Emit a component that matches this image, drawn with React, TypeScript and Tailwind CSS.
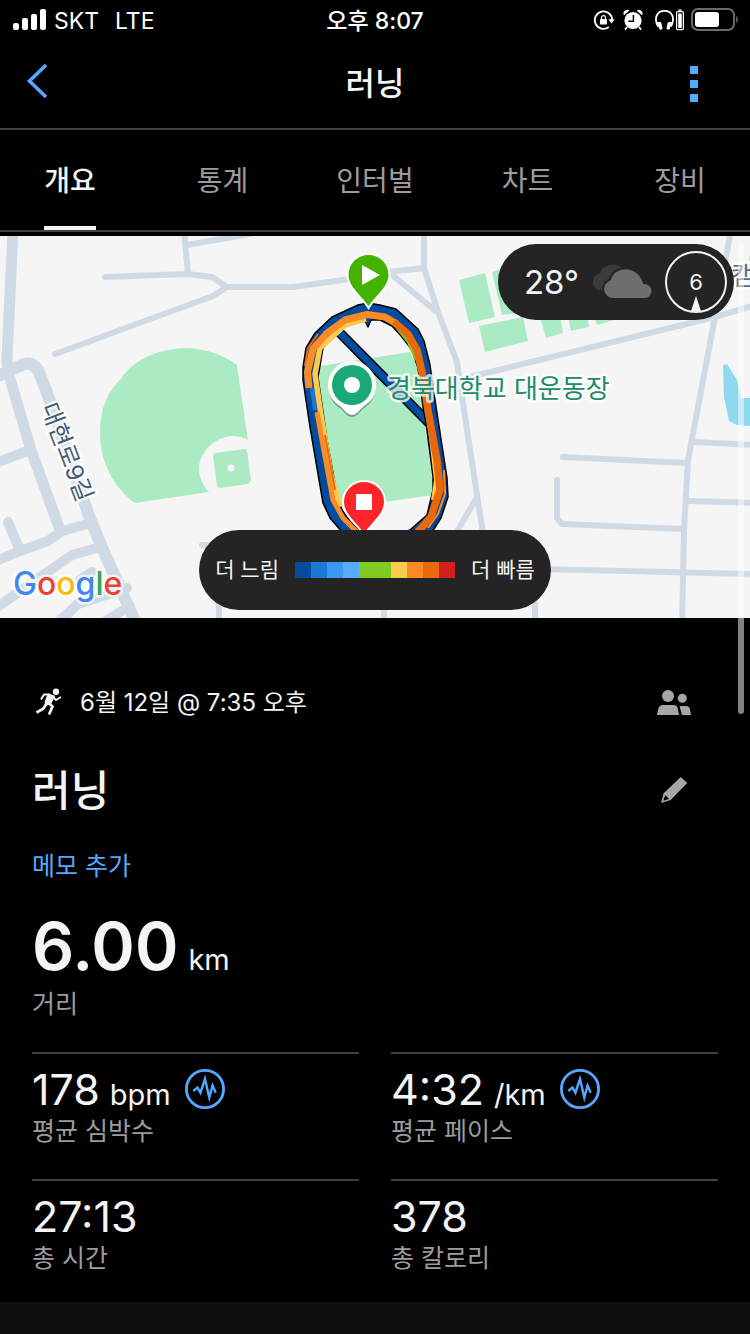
import type { ReactNode } from 'react';

const legendColors = [
  '#034b9f', '#1a78d6', '#3c97f5', '#58aaff', '#82cb20',
  '#82cb20', '#fccb4e', '#fc8b26', '#ea680c', '#d41f1f',
];

const tabs = ['개요', '통계', '인터벌', '차트', '장비'];

function StatusBar() {
  return (
    <div className="grid h-10 grid-cols-3 items-center px-3 text-[23px] leading-none text-white">
      <div className="flex items-center">
        <svg width="34" height="22" viewBox="0 0 34 22" fill="#fff" aria-hidden="true">
          <rect x="1" y="14" width="6" height="7" rx="2" />
          <rect x="10" y="9" width="6" height="12" rx="2" />
          <rect x="19" y="5" width="6" height="16" rx="2" />
          <rect x="28" y="0" width="6" height="21" rx="2" />
        </svg>
        <span className="ml-2 pt-0.5">SKT</span>
        <span className="ml-4 pt-0.5">LTE</span>
      </div>
      <div className="pt-0.5 text-center font-medium">오후 8:07</div>
      <div className="flex items-center justify-end">
        <svg width="22" height="22" viewBox="0 0 22 22" fill="none" stroke="#fff" strokeWidth="1.8" aria-hidden="true">
          <path d="M19.2 11a8.7 8.7 0 1 0-3.4 7" />
          <path d="M15.4 10.2h6.2l-3 4.4z" fill="#fff" stroke="none" />
          <rect x="7" y="10" width="7" height="5.6" rx="0.8" fill="#fff" stroke="none" />
          <path d="M8.5 10V8.6a2 2 0 0 1 4 0V10" strokeWidth="1.2" />
        </svg>
        <svg className="ml-2" width="20" height="22" viewBox="0 0 20 22" fill="#fff" aria-hidden="true">
          <circle cx="10" cy="11.5" r="8.6" />
          <path d="M1 6.2a3.6 3.6 0 0 1 5.4-4.6zM19 6.2a3.6 3.6 0 0 0-5.4-4.6z" />
          <path d="M4 18l-2 2.6M16 18l2 2.6" stroke="#fff" strokeWidth="1.8" />
          <path d="M10.4 6v6.3H5.4" fill="none" stroke="#000" strokeWidth="1.5" />
        </svg>
        <svg className="ml-3" width="30" height="22" viewBox="0 0 30 22" aria-hidden="true">
          <path d="M3 17.5C-1.5 9 2 1.8 9.500 1.800S20.500 9 16 17.500" fill="none" stroke="#fff" strokeWidth="1.8" />
          <path d="M2 13.500c2-1.500 4-.8 4.500 1l1 4.500c0 1.800-2.300 2.300-3.300.8zM17 13.500c-2-1.500-4-.8-4.500 1l-1 4.500c0 1.800 2.300 2.300 3.300.8z" fill="#fff" />
          <rect x="21.600" y="2.600" width="6.800" height="18" rx="1" fill="none" stroke="#fff" strokeWidth="1.200" />
          <rect x="23.400" y="0.400" width="3.200" height="1.400" fill="#fff" />
          <rect x="23.200" y="4.500" width="3.600" height="14.500" fill="#fff" />
        </svg>
        <svg className="-mr-px ml-1.5" width="48" height="24" viewBox="0 0 48 24" aria-hidden="true">
          <rect x="1" y="1" width="42" height="21" rx="6" fill="none" stroke="#6b6b6b" strokeWidth="2" />
          <rect x="4" y="4" width="24" height="15" rx="3" fill="#fff" />
          <path d="M45.200 8c2.200 1.200 2.200 5.800 0 7z" fill="#6b6b6b" />
        </svg>
      </div>
    </div>
  );
}

function RouteMap() {
  return (
    <svg
      className="block h-[382px] w-full"
      viewBox="0 236 750 382"
      preserveAspectRatio="xMidYMid slice"
      role="img"
      aria-label="러닝 경로 지도"
    >
      <rect x="0" y="236" width="750" height="382" fill="#f5f5f5" />

      {/* Parks, fields and water */}
      <g fill="#aaebc4">
        <path d="M135 503C112 486 100 460 100 433C100 408 108 391 121 379C133 359 160 348 188 348C207 349 224 355 237 365L239 380L248 440C222 424 180 459 209 492Z" />
        <path d="M215 453L245 449Q247 449 247 451L251 481L248 484L220 488L217 486L213 455Z" />
        <path d="M320 366L410 352L418 368L434 495L340 508L318 400Z" />
        <path d="M459 280L485 273L495 317L469 323Z" />
        <path d="M492 272L520 262L530 312L502 315Z" />
        <path d="M479 326L523 317L528 341L485 352Z" />
        <path d="M541 320L560 316L563 333L546 338Z" />
        <path d="M568 316L587 312L589 327L571 331Z" />
        <path d="M594 316L614 314L614 320L597 325Z" />
        <path d="M749 256h1v6h-1z" />
      </g>
      <circle cx="231" cy="468" r="3.600" fill="#f5f5f5" />
      <path d="M723 365L727 364L737 380L741 398L750 398V426L737 425L729 421L724 397Z" fill="#8fd9ee" />

      {/* Streets */}
      <g fill="none" stroke="#d0dae4" strokeLinecap="round" strokeLinejoin="round" strokeWidth="6">
        <path d="M184 230L188 274M187 245L250 234M105 277L187 274L212 277L227 287L293 287L350 279M227 287L213 296L55 354" />
        <path d="M388 272L424 268V230M424 268L438 312L457 362L467 430L484 540M391 274L437 312" />
        <path d="M470 377L715 317L755 305M731 230L715 317L688 460L684 530L682 625" />
        <path d="M693 442L755 445M563 457L687 463M557 480V518L562 524L683 529M690 501L755 503M540 569L755 574" />
        <path d="M477 497L455 535M384 600V625M535 600V625M219 600V625M202 545H225" />
        <path d="M13 230L7 360L8 372L31 450L60 530" strokeWidth="11" />
        <path d="M-4 377L24 364Q33 362 38 370L46 390L88 513L100 543L138 628" strokeWidth="12" />
        <path d="M-4 463L30 450M-4 561L20 551L48 541L62 531L91 523M8 522L19 548M100 547L72 555L-4 608" strokeWidth="10" />
        <path d="M127 588L78 604L55 625M92 572L80 580M130 606L98 626" strokeWidth="10" />
      </g>

      {/* Recorded track */}
      <path d="M337 330L429 423" stroke="#000" strokeWidth="10" />
      <path d="M337 330L429 423" stroke="#034b9f" strokeWidth="7" />
      <path
        fillRule="evenodd"
        fill="#034b9f"
        stroke="#000"
        strokeWidth="1.500"
        strokeLinejoin="round"
        d="M368 303L380 305L396 309L418 329L424 341L430 365L435 400L447 478L448 497L441 518L428 538L415 545H355L343 533L330 518L323 503L310 427L303 380L303 367L306 348L315 333L332 317L358 305Z
           M365 321L368 327L371 320L380 320L392 326L402 337L412 350L418 368L423 407L426 423L433 477L433 490L427 515L410 530L390 538L363 534L350 521L342 510L337 495L327 440L318 377L323 348L340 328L353 321Z"
      />
      <g fill="none" strokeLinejoin="round">
        <path d="M305 366L308 348L318 334" stroke="#ea680c" strokeWidth="2" />
        <path d="M312 388L315 410" stroke="#1a78d6" strokeWidth="4" />
        <path d="M347 325L327 343M397 328L408 342L416 360" stroke="#82cb20" strokeWidth="2.500" />
        <path d="M366 319L345 325L320 348L315 374L321 415L331 475L340 507" stroke="#fccb4e" strokeWidth="5.500" />
        <path d="M426 400L432 445L436 480L433 500" stroke="#fccb4e" strokeWidth="4" />
        <path d="M309 388L307.500 372L313 349L327 333L345 320L367 314.500L385 317L397 324" stroke="#fc8b26" strokeWidth="7" />
        <path d="M317 412L322 440L333 500L343 518L357 532L368 540" stroke="#fc8b26" strokeWidth="5" />
        <path d="M325 435L335 490" stroke="#ea680c" strokeWidth="2" />
        <path d="M444 470L445 494L438 514L428 528" stroke="#fc8b26" strokeWidth="2" />
        <path d="M394 322L408 334L417 350L422 372L428 410L437 460L440 490L431 517L416 534" stroke="#ea680c" strokeWidth="7.500" />
      </g>

      {/* Place marker and labels */}
      <path d="M352 415C348 415 345 411 340 406C332 401 329 394 329 385A23 23 0 0 1 375 385C375 394 372 401 364 406C359 411 356 415 352 415Z" fill="#00000055" transform="translate(0 2)" />
      <path d="M352 415C348 415 345 411 340 406C332 401 328 394 328 385A24 24 0 0 1 376 385C376 394 372 401 364 406C359 411 356 415 352 415Z" fill="#fff" />
      <circle cx="352" cy="385" r="20" fill="#19a974" />
      <circle cx="352" cy="385" r="8" fill="#fff" />
      <g stroke="#ffffffcc" strokeWidth="5" strokeLinejoin="round" paintOrder="stroke">
        <text x="387" y="398" fontSize="26" fill="#208a69">경북대학교 대운동장</text>
        <text x="731" y="285" fontSize="26" fill="#566b7f">캠</text>
        <text x="67" y="452" fontSize="24" fill="#465b72" textAnchor="middle" dominantBaseline="central" transform="rotate(69 67 452)">대현로9길</text>
      </g>
      <text x="13" y="595" fontSize="32" fontWeight="500" stroke="#ffffffaa" strokeWidth="5" strokeLinejoin="round" paintOrder="stroke">
        <tspan fill="#4285f4">G</tspan><tspan fill="#ea4335">o</tspan><tspan fill="#fbbc05">o</tspan><tspan fill="#4285f4">g</tspan><tspan fill="#34a853">l</tspan><tspan fill="#ea4335">e</tspan>
      </text>

      {/* Start and finish pins */}
      <path d="M368.500 308C362 297 347.500 288 347.500 275A21 21 0 0 1 389.500 275C389.500 288 375 297 368.500 308Z" fill="#44b200" stroke="#fff" strokeWidth="2" />
      <path d="M362 265L380 275L362 285Z" fill="#fff" />
      <path d="M364 535C357 524 343 515 343 502A21 21 0 0 1 385 502C385 515 371 524 364 535Z" fill="#ff2429" stroke="#fff" strokeWidth="2" />
      <rect x="356" y="494" width="16" height="16" fill="#fff" />
    </svg>
  );
}

function Weather() {
  return (
    <div className="absolute top-2 right-4 flex h-[76px] items-center rounded-full bg-[#242424] pr-[7px] pl-[26px] text-[#f4f4f4]">
      <span className="text-[33px] leading-none">28°</span>
      <svg className="ml-3 shrink-0" width="62" height="36" viewBox="0 0 62 36" aria-hidden="true">
        <path d="M8 26A8.500 8.500 0 0 1 9 9.500C11 -1 29 -3 34 8L30 26Z" fill="#3b3b3b" />
        <path d="M22 35A10 10 0 0 1 19 15.500C22 1 47 -1 53 19A8 8 0 0 1 54 35Z" fill="#6e6e6e" stroke="#242424" strokeWidth="2" />
      </svg>
      <div className="relative ml-3 flex size-[62px] items-center justify-center rounded-full border-2 border-[#f4f4f4]">
        <span className="text-[22px] leading-none">6</span>
        <svg className="absolute bottom-0" width="12" height="15" viewBox="0 0 12 15" aria-hidden="true">
          <path d="M6 0L11 15H1Z" fill="#f4f4f4" />
        </svg>
      </div>
    </div>
  );
}

function Legend() {
  return (
    <div className="absolute inset-x-0 bottom-2 flex justify-center">
      <div className="flex h-20 items-center gap-4 rounded-full bg-[#242424] px-4 text-[21px] text-[#f4f4f4]">
        <span>더 느림</span>
        <div className="flex">
          {legendColors.map((color, i) => (
            <span key={i} className="h-4 w-4" style={{ backgroundColor: color }} />
          ))}
        </div>
        <span>더 빠름</span>
      </div>
    </div>
  );
}

function WaveButton({ label }: { label: string }) {
  return (
    <button type="button" aria-label={label} className="ml-3.5 self-center">
      <svg width="40" height="40" viewBox="0 0 40 40" fill="none" stroke="#54a8ff" aria-hidden="true">
        <circle cx="20" cy="20" r="18.600" strokeWidth="2.800" />
        <path d="M8.300 22L12.500 18.500L15.400 23.700L20 10L24.300 28.500L27.600 16.500L30.700 23.700" strokeWidth="2.400" strokeMiterlimit="6" />
      </svg>
    </button>
  );
}

function Stat({ value, unit, label, children }: { value: string; unit?: string; label: string; children?: ReactNode }) {
  return (
    <div className="border-t-2 border-[#404040] pt-[11px] pb-[30px]">
      <div className="flex h-12 items-baseline leading-[48px]">
        <span className="text-[43px]">{value}</span>
        {unit && <span className="ml-2.5 text-[29px]">{unit}</span>}
        {children}
      </div>
      <div className="text-[25px] leading-9 text-[#9c9c9c]">{label}</div>
    </div>
  );
}

export default function App() {
  return (
    <div className="relative min-h-screen overflow-hidden bg-black font-['Inter','Noto_Sans_CJK_KR',sans-serif] text-[#f4f4f4]">
      <StatusBar />
      <header className="flex h-[90px] items-center justify-between border-b-2 border-[#404040] px-6">
        <button type="button" aria-label="뒤로" className="flex size-16 items-center pb-1.5">
          <svg width="26" height="36" viewBox="0 0 26 36" fill="none" stroke="#54a8ff" strokeWidth="3.600" aria-hidden="true">
            <path d="M22 2L5.500 18L22 34" />
          </svg>
        </button>
        <h1 className="text-[32px] font-medium">러닝</h1>
        <button type="button" aria-label="더보기" className="flex size-16 flex-col items-center justify-center gap-1.5">
          <span className="size-2 bg-[#54a8ff]" />
          <span className="size-2 bg-[#54a8ff]" />
          <span className="size-2 bg-[#54a8ff]" />
        </button>
      </header>
      <nav className="mb-1 flex h-[102px] justify-between border-b-2 border-[#404040] px-8">
        {tabs.map((tab, i) => (
          <a
            key={tab}
            href="#"
            className="flex w-19 justify-center text-[28px] whitespace-nowrap"
          >
            <span className={i === 0 ? 'flex items-center border-b-4 border-[#f4f4f4] pt-1.5 font-medium' : 'flex items-center border-b-4 border-transparent pt-1.5 text-[#9c9c9c]'}>
              {tab}
            </span>
          </a>
        ))}
      </nav>

      <div className="relative">
        <RouteMap />
        <Weather />
        <Legend />
      </div>

      <main className="px-8 pt-[60px]">
        <div className="flex h-12 items-center">
          <svg className="ml-1" width="28" height="28" viewBox="0 0 28 28" fill="none" stroke="#f4f4f4" strokeLinejoin="round" aria-hidden="true">
            <circle cx="20" cy="3.700" r="3.200" fill="#f4f4f4" stroke="none" />
            <path d="M12 6L18.500 8L15 15.500L10 17.500L9 14Z" fill="#f4f4f4" strokeWidth="1" />
            <path d="M14 6.500H8L5 11.500M17 9L20 12L25 9" strokeWidth="2" />
            <path d="M10.500 15.500L7.500 20.500L0.500 24.500M12 14.500L16.500 18.500L13 26.500" strokeWidth="2.800" />
          </svg>
          <span className="ml-4 pt-0.5 text-[24px]">6월 12일 @ 7:35 오후</span>
          <button type="button" aria-label="공개 설정" className="mr-[26px] ml-auto">
            <svg width="35" height="25" viewBox="0 0 35 25" fill="#a6a6a6" aria-hidden="true">
              <circle cx="11" cy="6" r="6" />
              <path d="M0 25L1.300 18.800Q2.200 15 6 15H16.500Q19.800 15 20.700 18.300L22 25Z" />
              <circle cx="25.300" cy="8.300" r="4.500" />
              <path d="M22.500 16H29Q32.300 16 32.900 19L34 25H25Z" />
            </svg>
          </button>
        </div>
        <div className="mt-8 flex h-16 items-center">
          <h2 className="text-[42px] font-medium">러닝</h2>
          <button type="button" aria-label="이름 편집" className="mr-[30px] ml-auto">
            <svg width="27" height="27" viewBox="0 0 27 27" aria-hidden="true">
              <path d="M0 26L2.700 16.300L19.700 0L26.300 6L9.700 23Z" fill="#a6a6a6" />
              <path d="M4.200 18L8 22L2.300 23.800Z" fill="#000" />
            </svg>
          </button>
        </div>
        <a href="#" className="mt-[26px] block text-[25px] leading-9 text-[#54a8ff]">메모 추가</a>

        <div className="mt-[22px] flex h-20 items-baseline leading-[80px]">
          <span className="text-[66px] font-semibold">6.00</span>
          <span className="ml-2.5 text-[29px]">km</span>
        </div>
        <div className="text-[25px] leading-9 text-[#9c9c9c]">거리</div>

        <div className="mt-[30px] -mb-1 grid grid-cols-2 gap-x-8">
          <Stat value="178" unit="bpm" label="평균 심박수">
            <WaveButton label="심박수 차트" />
          </Stat>
          <Stat value="4:32" unit="/km" label="평균 페이스">
            <WaveButton label="페이스 차트" />
          </Stat>
          <Stat value="27:13" label="총 시간" />
          <Stat value="378" label="총 칼로리" />
        </div>
      </main>
      <div className="h-8 bg-[#0f0f0f]" />
      <div className="absolute top-[243px] right-1.5 h-[471px] w-1.5 rounded-full bg-white/50" />
    </div>
  );
}
